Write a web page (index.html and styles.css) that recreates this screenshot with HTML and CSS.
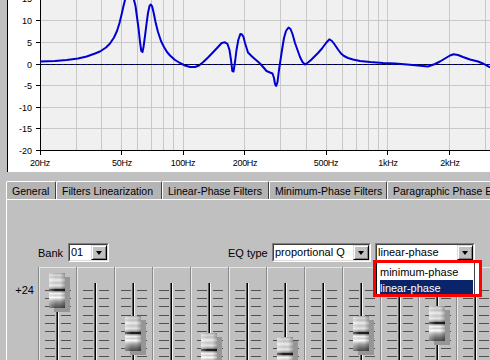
FILE: index.html
```html
<!DOCTYPE html>
<html lang="en">
<head>
<meta charset="utf-8">
<title>Equalizer</title>
<link rel="stylesheet" href="styles.css">
</head>
<body>
<div class="scope">
  <svg width="482" height="172" viewBox="8 0 482 172" shape-rendering="crispEdges">
    <rect x="40" y="0" width="450" height="150" fill="#f0f0f0"/>
    <g stroke="#c8c8c8" stroke-width="1">
      <line x1="76.5" y1="0" x2="76.5" y2="150"/>
      <line x1="101.5" y1="0" x2="101.5" y2="150"/>
      <line x1="121.5" y1="0" x2="121.5" y2="150"/>
      <line x1="137.5" y1="0" x2="137.5" y2="150"/>
      <line x1="151.5" y1="0" x2="151.5" y2="150"/>
      <line x1="163.5" y1="0" x2="163.5" y2="150"/>
      <line x1="173.5" y1="0" x2="173.5" y2="150"/>
      <line x1="183.5" y1="0" x2="183.5" y2="150"/>
      <line x1="244.5" y1="0" x2="244.5" y2="150"/>
      <line x1="280.5" y1="0" x2="280.5" y2="150"/>
      <line x1="306.5" y1="0" x2="306.5" y2="150"/>
      <line x1="326.5" y1="0" x2="326.5" y2="150"/>
      <line x1="342.5" y1="0" x2="342.5" y2="150"/>
      <line x1="356.5" y1="0" x2="356.5" y2="150"/>
      <line x1="368.5" y1="0" x2="368.5" y2="150"/>
      <line x1="378.5" y1="0" x2="378.5" y2="150"/>
      <line x1="387.5" y1="0" x2="387.5" y2="150"/>
      <line x1="449.5" y1="0" x2="449.5" y2="150"/>
      <line x1="485.5" y1="0" x2="485.5" y2="150"/>
      <line x1="40" y1="20.5" x2="490" y2="20.5"/>
      <line x1="40" y1="42.5" x2="490" y2="42.5"/>
      <line x1="40" y1="85.5" x2="490" y2="85.5"/>
      <line x1="40" y1="107.5" x2="490" y2="107.5"/>
      <line x1="40" y1="128.5" x2="490" y2="128.5"/>
    </g>
    <line x1="40" y1="64.5" x2="490" y2="64.5" stroke="#0000c0"/>
    <line x1="40" y1="64.5" x2="490" y2="64.5" stroke="#000" stroke-dasharray="3 3"/>
    <g stroke="#000">
      <line x1="40.5" y1="0" x2="40.5" y2="151"/>
      <line x1="40" y1="150.5" x2="490" y2="150.5"/>
      <line x1="36" y1="-1.5" x2="40" y2="-1.5"/>
      <line x1="36" y1="20.5" x2="40" y2="20.5"/>
      <line x1="36" y1="42.5" x2="40" y2="42.5"/>
      <line x1="36" y1="64.5" x2="40" y2="64.5"/>
      <line x1="36" y1="85.5" x2="40" y2="85.5"/>
      <line x1="36" y1="107.5" x2="40" y2="107.5"/>
      <line x1="36" y1="128.5" x2="40" y2="128.5"/>
      <line x1="36" y1="150.5" x2="40" y2="150.5"/>
      <line x1="40.5" y1="150" x2="40.5" y2="155"/>
      <line x1="121.5" y1="150" x2="121.5" y2="155"/>
      <line x1="183.5" y1="150" x2="183.5" y2="155"/>
      <line x1="244.5" y1="150" x2="244.5" y2="155"/>
      <line x1="326.5" y1="150" x2="326.5" y2="155"/>
      <line x1="387.5" y1="150" x2="387.5" y2="155"/>
      <line x1="449.5" y1="150" x2="449.5" y2="155"/>
    </g>
    <g class="axis-y" text-anchor="end">
      <text x="32" y="2">15</text>
      <text x="32" y="24">10</text>
      <text x="32" y="46">5</text>
      <text x="32" y="68">0</text>
      <text x="32" y="89">-5</text>
      <text x="32" y="111">-10</text>
      <text x="32" y="132">-15</text>
      <text x="32" y="154">-20</text>
    </g>
    <g class="axis-x" text-anchor="middle">
      <text x="40" y="166">20Hz</text>
      <text x="122" y="166">50Hz</text>
      <text x="183" y="166">100Hz</text>
      <text x="245" y="166">200Hz</text>
      <text x="326" y="166">500Hz</text>
      <text x="388" y="166">1kHz</text>
      <text x="450" y="166">2kHz</text>
    </g>
    <polyline class="response" shape-rendering="auto" points="40,61.5 55,61 66.7,60 78,58.5 86.7,56.5 95,53.5 100,51.5 106,47.5 110,43.5 114,37.5 117,31 119.5,23 121.7,14 123.5,6 125.5,-2 128,-8 131,-8 133.5,-2 135.5,6 137,17 138.5,28 140,42 141.3,51 142.5,52 143.5,47 145,36 146.5,24 148,13 149.5,6 150.8,4.5 152,6 153.5,12 155.5,22 158,32 161,41 164,47 167,52 170,55.5 175,60 180,63 185,65.5 190,67 195,67 199,65.5 203.3,62 208,57.5 213.3,52 218,47 221.7,43 225,42.3 227.5,44 229.5,50 231,60 232.3,71 233.5,71.5 235,62 236.5,50 238.3,40 240.3,34 242,34.5 243.5,37 245,43 248,52.5 252,56.5 256,60 260,63.5 264,68 266.5,71 270,72.5 272.5,73.5 274,78 275,84 276.2,86 277.5,82 279,70 280.5,60 282,50 284,38 286,31 288.5,27.5 290.5,29 292.5,34 295,43 297.5,50 300,57 302.5,62 305,64.5 308,62.5 311,60 314,57 318,53 322,48.5 326,43 329.3,39.3 332,41 335,45 338,49.5 341,53.5 344,56 348,58 353,59.5 360,61 370,62 383,63 395,63.5 407,64.5 418,65.5 428,66.5 435,64 440,61.5 445,58.5 450,55.5 453.5,54.3 458,55 463,57 470,59.5 478,61.5 484,64 490,67.5"/>
  </svg>
</div>

<div class="tabs">
  <div class="tab tab-general">General</div>
  <div class="tab tab-linearization">Filters Linearization</div>
  <div class="tab tab-linear">Linear-Phase Filters</div>
  <div class="tab tab-minimum">Minimum-Phase Filters</div>
  <div class="tab tab-paragraphic">Paragraphic Phase EQ</div>
</div>

<div class="page">
  <div class="eq-row">
    <span class="bank-label">Bank</span>
    <div class="combo combo-bank">
      <div class="combo-inner"><span class="combo-text">01</span><span class="combo-btn"></span></div>
    </div>
    <span class="type-label">EQ type</span>
    <div class="combo combo-q">
      <div class="combo-inner"><span class="combo-text">proportional Q</span><span class="combo-btn"></span></div>
    </div>
    <div class="combo combo-phase">
      <div class="combo-inner"><span class="combo-text">linear-phase</span><span class="combo-btn"></span></div>
      <div class="dropdown">
        <div class="dropdown-list">
          <div class="option">minimum-phase</div>
          <div class="option selected">linear-phase</div>
        </div>
      </div>
    </div>
  </div>

  <div class="faders">
    <div class="scale">+24</div>
    <div class="fader"><span class="ticks"></span><span class="track"></span><span class="ticks ticks-r"></span><span class="thumb" style="top:5px"></span></div>
    <div class="fader"><span class="ticks"></span><span class="track"></span><span class="ticks ticks-r"></span></div>
    <div class="fader"><span class="ticks"></span><span class="track"></span><span class="ticks ticks-r"></span><span class="thumb" style="top:48px"></span></div>
    <div class="fader"><span class="ticks"></span><span class="track"></span><span class="ticks ticks-r"></span></div>
    <div class="fader"><span class="ticks"></span><span class="track"></span><span class="ticks ticks-r"></span><span class="thumb" style="top:65px"></span></div>
    <div class="fader"><span class="ticks"></span><span class="track"></span><span class="ticks ticks-r"></span></div>
    <div class="fader"><span class="ticks"></span><span class="track"></span><span class="ticks ticks-r"></span><span class="thumb" style="top:69px"></span></div>
    <div class="fader"><span class="ticks"></span><span class="track"></span><span class="ticks ticks-r"></span></div>
    <div class="fader"><span class="ticks"></span><span class="track"></span><span class="ticks ticks-r"></span><span class="thumb" style="top:48px"></span></div>
    <div class="fader"><span class="ticks"></span><span class="track"></span><span class="ticks ticks-r"></span></div>
    <div class="fader"><span class="ticks"></span><span class="track"></span><span class="ticks ticks-r"></span><span class="thumb" style="top:38px"></span></div>
    <div class="fader"><span class="ticks"></span><span class="track"></span><span class="ticks ticks-r"></span></div>
  </div>
</div>
</body>
</html>
```

FILE: styles.css
```css
html, body {
	margin: 0;
	padding: 0;
}
body {
	width: 490px;
	height: 360px;
	overflow: hidden;
	background: #c0c0c0;
	font-family: "Liberation Sans", Arial, sans-serif;
	font-size: 11px;
	color: #000;
}

/* response graph */
.scope {
	height: 172px;
	margin-left: 7px;
	border-left: 1px solid #000;
	background: #fff;
}
.scope svg {
	display: block;
}
.scope text {
	font-family: "Liberation Sans", Arial, sans-serif;
	font-size: 9px;
	fill: #000;
}
.axis-x text {
	letter-spacing: -0.3px;
}
.response {
	fill: none;
	stroke: #0000d0;
	stroke-width: 2;
	stroke-linejoin: round;
}

/* tabs */
.tabs {
	display: flex;
	margin-top: 9px;
	padding-left: 6px;
	height: 18px;
	overflow: hidden;
}
.tab {
	flex: none;
	box-sizing: border-box;
	height: 18px;
	padding: 3px 0 0 5px;
	background: #b4b4b4;
	border-top: 1px solid #fff;
	border-left: 1px solid #fff;
	border-right: 1px solid #404040;
	border-radius: 2px 2px 0 0;
	font-size: 10.5px;
	line-height: 12px;
	white-space: nowrap;
	overflow: hidden;
}
.tab-general { width: 50px; }
.tab-linearization { width: 106px; }
.tab-linear { width: 107px; }
.tab-minimum { width: 118px; }
.tab-paragraphic { width: 120px; }

.page {
	margin-left: 6px;
	height: 161px;
	border-top: 1px solid #fff;
	border-left: 1px solid #fff;
}

/* bank / eq type row */
.eq-row {
	display: flex;
	align-items: center;
	height: 19px;
	margin-top: 43px;
	padding-left: 31px;
}
.bank-label {
	width: 30px;
}
.type-label {
	width: 44px;
	margin-left: 119px;
}
.combo {
	position: relative;
	display: flex;
	box-sizing: border-box;
	height: 19px;
	border: 1px solid;
	border-color: #808080 #fff #fff #808080;
}
.combo-inner {
	display: flex;
	flex: 1;
	border: 1px solid;
	border-color: #404040 #dcdcdc #dcdcdc #404040;
	background: #fff;
}
.combo-text {
	flex: 1;
	padding-left: 1px;
	line-height: 15px;
	white-space: nowrap;
	overflow: hidden;
}
.combo-btn {
	display: flex;
	align-items: center;
	justify-content: center;
	width: 16px;
	height: 15px;
	box-sizing: border-box;
	background: #c0c0c0;
	border: 1px solid;
	border-color: #dcdcdc #000 #000 #dcdcdc;
	box-shadow: inset 1px 1px #fff, inset -1px -1px #808080;
}
.combo-btn::before {
	content: "";
	border-style: solid;
	border-width: 4px 3.5px 0;
	border-color: #000 transparent transparent;
	margin-top: 1px;
}
.combo-bank { width: 41px; }
.combo-q { width: 99px; }
.combo-phase { width: 100px; margin-left: 4px; }

/* open list, outlined in red */
.dropdown {
	position: absolute;
	z-index: 10;
	left: -3px;
	top: 16px;
	width: 109px;
	height: 37px;
	box-sizing: border-box;
	border: 3px solid #f00;
	background: #fff;
	overflow: hidden;
}
.dropdown-list {
	box-sizing: border-box;
	width: 99px;
	height: 100%;
	padding-top: 1px;
	border-left: 1px solid #000;
	border-right: 1px solid #404040;
}
.option {
	height: 16px;
	line-height: 16px;
	margin-left: 3px;
	margin-right: 1px;
	white-space: nowrap;
}
.option.selected {
	background: #0a246a;
	color: #fff;
}

/* faders */
.faders {
	display: flex;
	margin-top: 5px;
	height: 100px;
}
.scale {
	flex: none;
	width: 27px;
	padding: 17px 5px 0 0;
	text-align: right;
	line-height: 12px;
}
.fader {
	position: relative;
	flex: none;
	display: flex;
	width: 38px;
	box-sizing: border-box;
	padding-left: 5px;
	border-top: 1px solid #e8e8e8;
	border-left: 1px solid #e8e8e8;
	box-shadow: -1px 0 #8a8a8a;
}
.ticks {
	width: 10px;
	margin-top: 22px;
	background: repeating-linear-gradient(to bottom,
		#505050 0 1px, transparent 1px 8px,
		#505050 8px 9px, transparent 9px 16px,
		#505050 16px 17px, transparent 17px 25px);
}
.ticks-r {
	margin-left: 2px;
}
.track {
	width: 1px;
	margin: 15px 0 0 1px;
	background: #000;
	border-left: 1px solid #5a5a5a;
	border-right: 1px solid #f4f4f4;
}
.thumb {
	position: absolute;
	left: 9px;
	width: 16px;
	height: 35px;
	background:
		linear-gradient(to right, rgba(255,255,255,.35), rgba(255,255,255,0) 40%, rgba(0,0,0,0) 70%, rgba(0,0,0,.25)),
		linear-gradient(to bottom, #a8a8a8 0, #d8d8d8 6%, #bcbcbc 12%, #ececec 20%, #c4c4c4 28%, #e4e4e4 36%, #9c9c9c 44%, #202020 46%, #202020 50%, #8a8a8a 52%, #f4f4f4 58%, #d0d0d0 64%, #f8f8f8 70%, #a0a0a0 80%, #707070 90%, #4a4a4a 100%);
	box-shadow: 5px 4px 0 #969696;
}
```
